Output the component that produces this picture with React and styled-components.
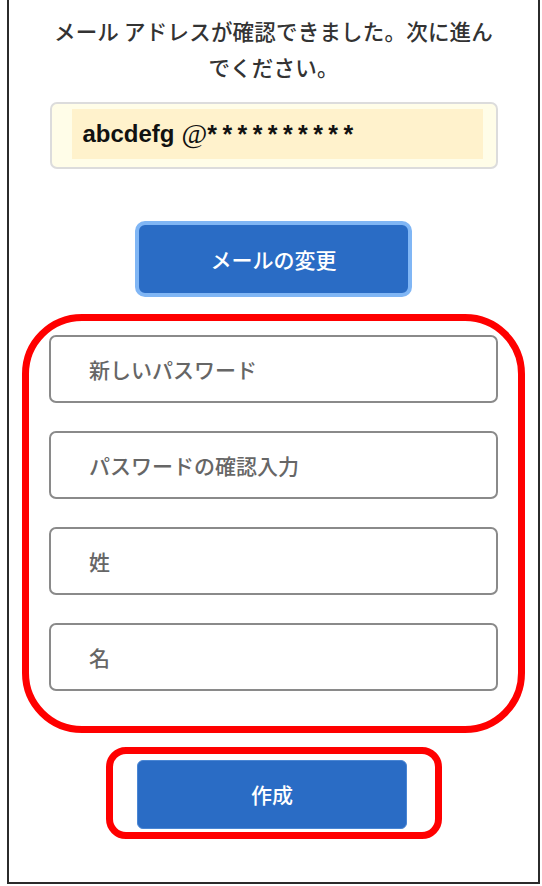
import styled, { createGlobalStyle } from "styled-components";

const GlobalStyle = createGlobalStyle`
  html, body {
    margin: 0;
    padding: 0;
    background: #fff;
  }
  body {
    font-family: "Noto Sans CJK JP", "Noto Sans", sans-serif;
  }
`;

// outer phone frame, top edge is cut off in the screenshot
const Frame = styled.div`
  box-sizing: border-box;
  width: 533px;
  height: 884px;
  margin-left: 7px;
  border: 2px solid #2b2b2b;
  border-top: none;
  display: flex;
  flex-direction: column;
  align-items: center;
`;

const Heading = styled.p`
  width: 440px;
  margin: 13px 0 0;
  text-align: center;
  font-size: 21.5px;
  letter-spacing: 0.2px;
  line-height: 36px;
  font-weight: 500;
  color: #333;
`;

const EmailBox = styled.div`
  box-sizing: border-box;
  width: 448px;
  height: 67px;
  margin-top: 17px;
  padding: 5px 13px 0 20px;
  background: #fffde8;
  border: 2px solid #dcdcdc;
  border-radius: 7px;
`;

const EmailHighlight = styled.div`
  height: 50px;
  display: flex;
  align-items: center;
  padding-left: 11px;
  background: #fff2cc;
  font-family: "Liberation Sans", Arial, sans-serif;
  font-weight: 700;
  font-size: 24px;
  color: #111;
`;

const AtMark = styled.span`
  font-family: "Liberation Serif", serif;
  font-weight: 400;
  font-size: 28px;
  margin-left: 7px;
`;

const Masked = styled.span`
  font-size: 25px;
  letter-spacing: 5.4px;
`;

const PrimaryButton = styled.button`
  box-sizing: border-box;
  display: flex;
  align-items: center;
  justify-content: center;
  width: ${(p) => p.$w}px;
  height: ${(p) => p.$h}px;
  margin: 0;
  padding: 0;
  background: #2a6cc5;
  border: ${(p) => (p.$focus ? "4px solid #80b6f5" : "1px solid #4a86d4")};
  border-radius: ${(p) => (p.$focus ? 10 : 6)}px;
  color: #fff;
  font-family: "Noto Sans CJK JP", sans-serif;
  font-size: 21px;
  font-weight: 500;
  cursor: pointer;
`;

const ChangeWrap = styled.div`
  margin-top: 52px;
`;

const RedSection = styled.div`
  box-sizing: border-box;
  width: 503px;
  height: 419px;
  margin-top: 17px;
  padding: 14px 20px 0;
  border: 7px solid #ff0000;
  border-radius: 60px;
  display: flex;
  flex-direction: column;
  gap: 28px;
  align-items: center;
`;

const Field = styled.input`
  box-sizing: border-box;
  width: 449px;
  height: 68px;
  flex-shrink: 0;
  padding: 0 0 0 38px;
  border: 2px solid #8a8a8a;
  border-radius: 7px;
  background: #fff;
  font-family: "Noto Sans CJK JP", sans-serif;
  font-size: 21px;
  font-weight: 500;
  color: #333;
  outline: none;

  &::placeholder {
    color: #666;
  }
`;

const RedCreate = styled.div`
  box-sizing: border-box;
  width: 336px;
  height: 92px;
  margin-top: 14px;
  border: 7px solid #ff0000;
  border-radius: 20px;
  display: flex;
  align-items: center;
  justify-content: center;
  padding: 2px 3px 0 0;
`;

export default function App() {
  return (
    <>
      <GlobalStyle />
      <Frame>
        <Heading>メール アドレスが確認できました。次に進んでください。</Heading>
        <EmailBox>
          <EmailHighlight>
            abcdefg<AtMark>@</AtMark>
            <Masked>**********</Masked>
          </EmailHighlight>
        </EmailBox>
        <ChangeWrap>
          <PrimaryButton $focus $w={277} $h={76}>メールの変更</PrimaryButton>
        </ChangeWrap>
        <RedSection>
          <Field placeholder="新しいパスワード" type="password" />
          <Field placeholder="パスワードの確認入力" type="password" />
          <Field placeholder="姓" />
          <Field placeholder="名" />
        </RedSection>
        <RedCreate>
          <PrimaryButton $w={270} $h={69}>作成</PrimaryButton>
        </RedCreate>
      </Frame>
    </>
  );
}
